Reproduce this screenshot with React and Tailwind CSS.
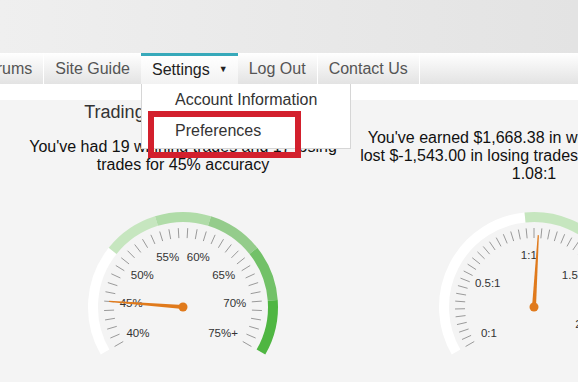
import React from 'react';

const NAV_ITEMS = [
  { label: 'Forums', sep: true },
  { label: 'Site Guide', sep: false },
  { label: 'Settings', active: true },
  { label: 'Log Out', sep: true },
  { label: 'Contact Us', sep: true },
];

// math angle (deg) -> svg point, y grows downward
function polar(cx, cy, r, deg) {
  const a = (deg * Math.PI) / 180;
  return [cx + r * Math.cos(a), cy - r * Math.sin(a)];
}

function arcPath(cx, cy, r, d1, d2) {
  const [x1, y1] = polar(cx, cy, r, d1);
  const [x2, y2] = polar(cx, cy, r, d2);
  const large = d1 - d2 > 180 ? 1 : 0;
  return `M${x1} ${y1} A${r} ${r} 0 ${large} 1 ${x2} ${y2}`;
}

function Gauge({ min, max, bands, tickStep, labels, value, needleLen = 74 }) {
  const cx = 100;
  const cy = 100;
  const toDeg = (v) => 210 - ((v - min) / (max - min)) * 240;

  const ticks = [];
  for (let v = min; v <= max + 1e-6; v += tickStep) ticks.push(v);

  const nd = toDeg(value);
  const [tx, ty] = polar(cx, cy, needleLen, nd);
  const [b1x, b1y] = polar(cx, cy, 2, nd + 90);
  const [b2x, b2y] = polar(cx, cy, 2, nd - 90);
  const [t1x, t1y] = polar(tx, ty, 0.6, nd + 90);
  const [t2x, t2y] = polar(tx, ty, 0.6, nd - 90);

  return (
    <svg width="200" height="160" viewBox="0 0 200 160" className="block">
      {bands.map((b, i) => (
        <path
          key={i}
          d={arcPath(cx, cy, 90, toDeg(b.from), toDeg(b.to))}
          stroke={b.color}
          strokeWidth="10"
          fill="none"
        />
      ))}
      {ticks.map((v, i) => {
        const d = toDeg(v);
        const [x1, y1] = polar(cx, cy, 69, d);
        const [x2, y2] = polar(cx, cy, 79, d);
        return (
          <line key={i} x1={x1} y1={y1} x2={x2} y2={y2} stroke="#8f8f8f" strokeWidth="0.9" />
        );
      })}
      {labels.map((l, i) => {
        const [x, y] = polar(cx, cy, 52, toDeg(l.v));
        return (
          <text
            key={i}
            x={x + (l.dx || 0)}
            y={y}
            textAnchor="middle"
            dominantBaseline="central"
            fontSize="11.5"
            fill="#333"
            fontFamily="'Liberation Sans', Arial, sans-serif"
          >
            {l.t}
          </text>
        );
      })}
      <polygon
        points={`${b1x},${b1y} ${t1x},${t1y} ${t2x},${t2y} ${b2x},${b2y}`}
        fill="#e07a1c"
      />
      <circle cx={cx} cy={cy} r="4.5" fill="#e07a1c" />
    </svg>
  );
}

export default function App() {
  return (
    <div className="relative w-[578px] h-[382px] overflow-hidden bg-[#f4f4f4] font-['Liberation_Sans',Arial,sans-serif]">
      {/* Header */}
      <div className="h-[53px] bg-linear-to-r from-[#efefef] to-[#e3e3e3]" />

      {/* Nav */}
      <div className="h-[31px] flex bg-linear-to-b from-[#ffffff] to-[#e3e3e3]">
        <div className="flex ml-[-33px]">
          {NAV_ITEMS.map((item) =>
            item.active ? (
              <div
                key={item.label}
                className="h-[31px] flex items-center pl-[11px] pr-[10px] border-t-[3px] border-[#37a9ba] bg-linear-to-b from-[#ffffff] to-[#f2f2f2] text-[16px] text-[#222]"
              >
                <span>{item.label}</span>
                <span className="ml-[9px] text-[9px] text-[#222]">▼</span>
              </div>
            ) : (
              <div
                key={item.label}
                className={`h-[31px] flex items-center px-[11px] text-[16px] text-[#555] ${
                  item.sep ? 'border-r border-white' : ''
                }`}
              >
                {item.label}
              </div>
            )
          )}
        </div>
      </div>

      <div className="h-[16px] bg-white" />

      {/* Content */}
      <div className="flex ml-[7px]">
        <div className="w-[352px] shrink-0 flex flex-col items-center">
          <div className="mt-[2px] text-[18px] leading-[20px] text-[#333] whitespace-nowrap">
            Trading Accuracy Gauge
          </div>
          <div className="mt-[16px] text-[16px] leading-[18px] text-[#111] text-center whitespace-nowrap">
            You've had 19 winning trades and 17 losing
            <br />
            trades for 45% accuracy
          </div>
          <div className="mt-[33px]">
            <Gauge
              min={40}
              max={75}
              tickStep={1}
              value={45}
              bands={[
                { from: 40, to: 50, color: '#ffffff' },
                { from: 50, to: 55, color: '#c6e6bf' },
                { from: 55, to: 60, color: '#b0dca8' },
                { from: 60, to: 65, color: '#94cc8b' },
                { from: 65, to: 70, color: '#72c168' },
                { from: 70, to: 75, color: '#4fb642' },
              ]}
              labels={[
                { v: 40, t: '40%' },
                { v: 45, t: '45%' },
                { v: 50, t: '50%' },
                { v: 55, t: '55%' },
                { v: 60, t: '60%' },
                { v: 65, t: '65%' },
                { v: 70, t: '70%' },
                { v: 75, t: '75%+', dx: -5 },
              ]}
            />
          </div>
        </div>

        <div className="w-[350px] shrink-0 flex flex-col items-center">
          <div className="mt-[29px] text-[16px] leading-[18px] text-[#111] text-center whitespace-nowrap">
            You've earned $1,668.38 in winning trades and
            <br />
            lost $-1,543.00 in losing trades for a profit ratio of
            <br />
            1.08:1
          </div>
          <div className="mt-[24px]">
            <Gauge
              min={0}
              max={2.1}
              tickStep={0.05}
              value={1.08}
              needleLen={72}
              bands={[
                { from: 0, to: 1, color: '#ffffff' },
                { from: 1, to: 1.5, color: '#c6e6bf' },
                { from: 1.5, to: 2.1, color: '#b0dca8' },
              ]}
              labels={[
                { v: 0, t: '0:1' },
                { v: 0.5, t: '0.5:1' },
                { v: 1, t: '1:1' },
                { v: 1.5, t: '1.5:1' },
                { v: 2, t: '2:1' },
              ]}
            />
          </div>
        </div>
      </div>

      {/* Settings dropdown */}
      <div className="absolute left-[141px] top-[84px] w-[210px] pb-[1px] bg-white border border-t-0 border-[#d6d6d6] z-10 text-[16px] text-[#333]">
        <div className="h-[31px] leading-[31px] pl-[33px]">Account Information</div>
        <div className="h-[32px] leading-[31px] pl-[33px]">Preferences</div>
      </div>

      {/* Highlight box */}
      <div className="absolute left-[148px] top-[111px] w-[153px] h-[47px] border-[6px] border-[#d3202d] z-20" />
    </div>
  );
}
